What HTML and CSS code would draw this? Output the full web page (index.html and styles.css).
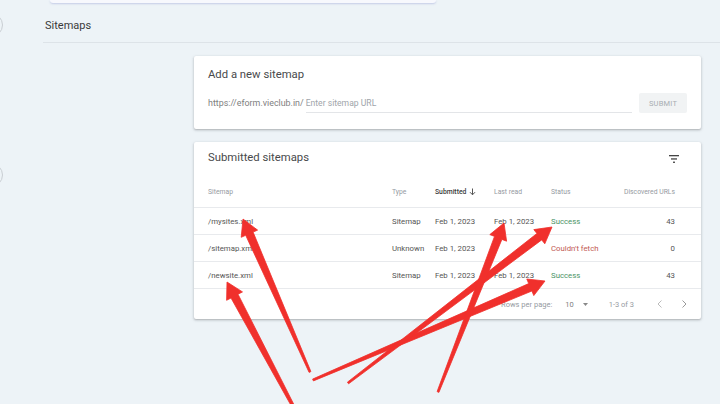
FILE: index.html
```html
<!DOCTYPE html>
<html lang="en">
<head>
<meta charset="utf-8">
<title>Sitemaps</title>
<link rel="stylesheet" href="styles.css">
</head>
<body>
<div class="app">
  <div class="rail">
    <span class="rail-btn"></span>
    <span class="rail-btn rail-btn-2"></span>
  </div>
  <div class="content">
    <div class="topcard"></div>
    <div class="pagehead"><h1 class="pagetitle">Sitemaps</h1></div>
    <div class="cards">
      <section class="card card-add">
        <h2 class="card-title">Add a new sitemap</h2>
        <div class="add-row">
          <span class="prefix">https://eform.vieclub.in/</span>
          <span class="url-input">Enter sitemap URL</span>
          <span class="submit-btn">SUBMIT</span>
        </div>
      </section>
      <section class="card card-list">
        <div class="list-head">
          <h2 class="card-title">Submitted sitemaps</h2>
          <svg class="filter-icon" width="10" height="8" viewBox="0 0 10 8"><rect x="0" y="0" width="10" height="1.3" fill="#444"/><rect x="2" y="3.3" width="6" height="1.3" fill="#444"/><rect x="4" y="6.6" width="2" height="1.3" fill="#444"/></svg>
        </div>
        <div class="trow thead">
          <span>Sitemap</span>
          <span>Type</span>
          <span class="sorted">Submitted <svg width="7" height="8" viewBox="0 0 7 8"><path d="M3.5 0.5v6.2M1 4.2l2.5 2.6 2.5-2.6" fill="none" stroke="#555" stroke-width="1"/></svg></span>
          <span>Last read</span>
          <span>Status</span>
          <span class="num">Discovered URLs</span>
        </div>
        <div class="trow">
          <span>/mysites.xml</span>
          <span>Sitemap</span>
          <span>Feb 1, 2023</span>
          <span>Feb 1, 2023</span>
          <span class="ok">Success</span>
          <span class="num">43</span>
        </div>
        <div class="trow">
          <span>/sitemap.xml</span>
          <span>Unknown</span>
          <span>Feb 1, 2023</span>
          <span></span>
          <span class="err">Couldn't fetch</span>
          <span class="num">0</span>
        </div>
        <div class="trow">
          <span>/newsite.xml</span>
          <span>Sitemap</span>
          <span>Feb 1, 2023</span>
          <span>Feb 1, 2023</span>
          <span class="ok">Success</span>
          <span class="num">43</span>
        </div>
        <div class="pager">
          <span class="pager-label">Rows per page:</span>
          <span class="pager-size">10</span>
          <svg class="pager-caret" width="5" height="3" viewBox="0 0 5 3"><path d="M0 0h5L2.5 3z" fill="#888"/></svg>
          <span class="pager-range">1-3 of 3</span>
          <svg class="pager-prev" width="5" height="8" viewBox="0 0 5 8"><path d="M4.5 0.5L1 4l3.5 3.5" fill="none" stroke="#bbb" stroke-width="1"/></svg>
          <svg class="pager-next" width="5" height="8" viewBox="0 0 5 8"><path d="M0.5 0.5L4 4 0.5 7.5" fill="none" stroke="#999" stroke-width="1"/></svg>
        </div>
      </section>
    </div>
  </div>
</div>
<svg class="arrows" width="720" height="404" viewBox="0 0 720 404">
  <g fill="#f0302c" stroke="#f0302c" stroke-width="0.8" stroke-linejoin="round">
    <polygon points="310.9,371.6 253.1,232.1 257.6,230.1 243,219 241.2,237.3 245.7,235.3 309.1,372.4"/>
    <polygon points="294.3,405.3 238.0,294.2 242.5,291.9 227,282 226.6,300.3 231.0,298.0 291.7,406.7"/>
    <polygon points="313.4,380.9 531.9,291.0 533.8,295.6 545,281 526.8,279.0 528.7,283.6 312.6,379.1"/>
    <polygon points="348.6,383.8 541.7,239.9 544.8,243.8 552,227 533.8,229.6 536.9,233.5 347.4,382.2"/>
    <polygon points="438.9,392.4 501.9,239.4 506.6,241.2 504,223 489.8,234.6 494.5,236.4 437.1,391.6"/>
  </g>
</svg>
</body>
</html>
```

FILE: styles.css
```css
* { box-sizing: border-box; }
html, body { margin: 0; padding: 0; }
body {
  width: 720px;
  height: 404px;
  overflow: hidden;
  background: #edf3f7;
  font-family: Roboto, "Noto Sans", "Liberation Sans", sans-serif;
  color: #3c4043;
  position: relative;
}
.app { display: flex; }
.rail {
  width: 0;
  display: flex;
  flex-direction: column;
}
.rail-btn {
  display: block;
  width: 24px;
  height: 24px;
  margin-left: -21px;
  margin-top: 13px;
  border-radius: 50%;
  border: 1px solid #c9ced3;
}
.rail-btn-2 { margin-top: 126px; }
.content {
  flex: 1;
  margin-left: 43px;
}
.topcard {
  margin-left: 7px;
  width: 386px;
  height: 3px;
  background: #f7f8fd;
  border-radius: 0 0 3px 3px;
  box-shadow: 0 1px 2px rgba(120, 130, 200, 0.35);
}
.pagehead {
  height: 40px;
  padding: 16px 0 0 2px;
  border-bottom: 1px solid #dde3e8;
}
.pagetitle {
  margin: 0;
  font-size: 11px;
  line-height: 14px;
  font-weight: 400;
  color: #3a3a3a;
}
.cards {
  margin-left: 151px;
  width: 507px;
  padding-top: 13px;
  display: flex;
  flex-direction: column;
  gap: 13px;
}
.card {
  background: #fff;
  border-radius: 2px;
  box-shadow: 0 1px 2px rgba(60, 64, 67, 0.3), 0 1px 3px 1px rgba(60, 64, 67, 0.08);
}
.card-add {
  height: 73px;
  padding: 12px 14px 0 14px;
}
.card-title {
  margin: 0;
  font-size: 11.3px;
  line-height: 14px;
  font-weight: 400;
  color: #48494b;
}
.add-row {
  display: flex;
  align-items: center;
  margin-top: 11px;
  height: 20px;
}
.prefix {
  font-size: 8.9px;
  color: #808080;
  white-space: nowrap;
}
.url-input {
  flex: 1;
  margin-left: 2px;
  margin-right: 7px;
  height: 20px;
  padding-top: 5px;
  font-size: 8.6px;
  color: #a0a5aa;
  border-bottom: 1px solid #e3e5e8;
}
.submit-btn {
  width: 48px;
  height: 20px;
  display: flex;
  align-items: center;
  justify-content: center;
  background: #f1f3f4;
  border-radius: 2px;
  font-size: 7.5px;
  color: #a8adb2;
  letter-spacing: 0.2px;
}
.card-list { height: 177px; }
.list-head {
  display: flex;
  align-items: center;
  justify-content: space-between;
  padding: 9px 22px 0 14px;
  height: 23px;
}
.filter-icon { display: block; margin-top: 1px; }
.trow {
  display: grid;
  grid-template-columns: 184px 43px 59px 57px 64px 1fr;
  align-items: center;
  height: 27px;
  padding: 0 26px 0 14px;
  border-bottom: 1px solid #e8eaed;
  font-size: 7.8px;
  color: #555;
  white-space: nowrap;
}
.thead {
  margin-top: 11px;
  height: 32px;
  font-size: 6.8px;
  color: #959a9f;
}
.thead .sorted {
  color: #3a3a3a;
  font-weight: 500;
  display: flex;
  align-items: center;
  gap: 3px;
}
.num { text-align: right; }
.ok { color: #4a9466; }
.err { color: #c25a55; }
.pager {
  display: flex;
  align-items: center;
  justify-content: flex-end;
  height: 30px;
  padding: 0 14px 0 14px;
  font-size: 7.5px;
  color: #959a9f;
}
.pager-size { margin-left: 13px; color: #808080; }
.pager-caret { margin-left: 9px; display: block; }
.pager-range { margin-left: 21px; }
.pager-prev { margin-left: 23px; display: block; }
.pager-next { margin-left: 20px; display: block; }
.arrows {
  position: absolute;
  left: 0;
  top: 0;
  pointer-events: none;
}
```
